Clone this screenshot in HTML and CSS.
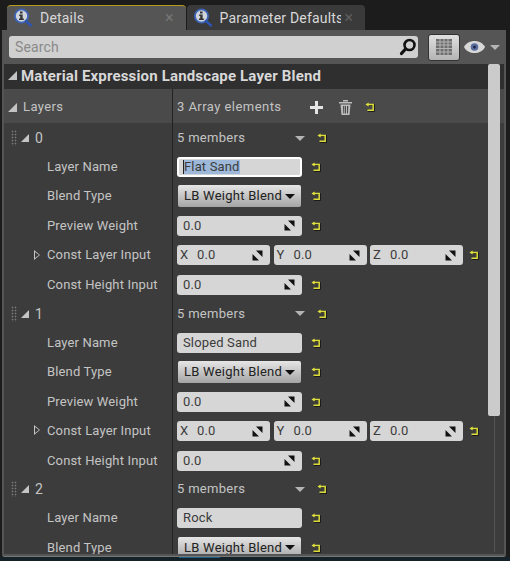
FILE: index.html
```html
<!DOCTYPE html>
<html lang="en">
<head>
  <meta charset="UTF-8">
  <meta name="viewport" content="width=device-width, initial-scale=1.0">
  <title>Details</title>
  <link rel="stylesheet" href="styles.css">
</head>
<body>
  <svg class="defs" width="0" height="0">
    <symbol id="i-reset" viewBox="0 0 10 10">
      <path d="M3.500 3H9V9H3" fill="none" stroke="#111" stroke-width="1.500"/>
      <path d="M3 2.500H8.200V8.200H2.500" fill="none" stroke="#dcdc3a" stroke-width="1.500"/>
      <path d="M3.600 .5V4.500L.5 2.500z" fill="#e4e43e"/>
    </symbol>
    <symbol id="i-spin" viewBox="0 0 11 11">
      <path d="M4 .5h6.500V7zM.5 4 7 10.500H.5z" fill="#111"/>
    </symbol>
    <symbol id="i-tab" viewBox="0 0 20 20">
      <circle cx="8.500" cy="8" r="6.600" fill="#cfd3da" stroke="#3e64b8" stroke-width="1.800"/>
      <path d="M13 13l5 4.500" stroke="#2e55b0" stroke-width="2.400" stroke-linecap="round"/>
      <path d="M7 3.600h2.600v1.800H7zM6.200 6.600h3.400v4h1.200v1.300H6v-1.300h1.200V8H6.200z" fill="#333"/>
    </symbol>
  </svg>

  <div class="tabs">
    <div class="tab tab-active">
      <svg class="tab-icon"><use href="#i-tab"/></svg>
      <span class="tab-label">Details</span>
      <span class="tab-close">×</span>
    </div>
    <div class="tab">
      <svg class="tab-icon"><use href="#i-tab"/></svg>
      <span class="tab-label">Parameter Defaults</span>
      <span class="tab-close">×</span>
    </div>
  </div>

  <div class="panel">
    <div class="toolbar">
      <div class="search">
        <span class="search-text">Search</span>
        <svg class="search-icon" viewBox="0 0 18 18"><circle cx="10.500" cy="7" r="5" fill="none" stroke="#111" stroke-width="2.600"/><path d="M6.500 11 2.500 15.500" stroke="#111" stroke-width="3.200" stroke-linecap="round"/></svg>
      </div>
      <div class="grid-btn">
        <svg width="16" height="16" viewBox="0 0 16 16"><path d="M0 0h16v16H0z" fill="#6e6e6e"/><path d="M0 3h16M0 6h16M0 9.500h16M0 13h16M4 0v16M8 0v16M12 0v16" stroke="#b4b4b4"/></svg>
      </div>
      <div class="eye">
        <svg width="21" height="12" viewBox="0 0 21 12"><path d="M0 6c4-8 17-8 21 0-4 8-17 8-21 0z" fill="#d8d8d8"/><circle cx="10.500" cy="6" r="3.800" fill="#5a6fa0"/><circle cx="10.500" cy="6" r="1.500" fill="#1f2a44"/></svg>
        <span class="arrow-down eye-arrow"></span>
      </div>
    </div>

    <div class="details">
      <div class="scroll-track"><div class="scroll-thumb"></div></div>
      <div class="title-row"><span class="tri"></span>Material Expression Landscape Layer Blend</div>

      <div class="row row-top">
        <div class="name-cell"><span class="tri"></span><span class="top-label">Layers</span></div>
        <div class="value-cell">
          <span class="count">3 Array elements</span>
          <svg class="add-icon" viewBox="0 0 13 13"><path d="M5 0h3v5h5v3H8v5H5V8H0V5h5z" fill="#e4e4e4"/></svg>
          <svg class="trash-icon" viewBox="0 0 13 15"><path d="M0 2h13v1.500H0zM4 0h5v1.500H4zM1.500 4.500h10L10.500 15h-8zM4 6l.3 7.500h1V6zM6 6v7.500h1V6zM8 6v7.500h1L9.300 6z" fill="#bdbdbd" fill-rule="evenodd"/></svg>
          <svg class="reset"><use href="#i-reset"/></svg>
        </div>
      </div>

      <div class="row row-group">
        <div class="name-cell"><span class="grip"></span><span class="tri"></span><span class="index">0</span></div>
        <div class="value-cell">
          <span class="members">5 members</span><span class="arrow-down"></span>
          <svg class="reset"><use href="#i-reset"/></svg>
        </div>
      </div>
      <div class="row">
        <div class="name-cell label">Layer Name</div>
        <div class="value-cell">
          <div class="field text-field focused"><span class="selected">Flat Sand</span></div>
          <svg class="reset"><use href="#i-reset"/></svg>
        </div>
      </div>
      <div class="row">
        <div class="name-cell label">Blend Type</div>
        <div class="value-cell">
          <div class="combo">LB Weight Blend<span class="combo-arrow"></span></div>
          <svg class="reset"><use href="#i-reset"/></svg>
        </div>
      </div>
      <div class="row">
        <div class="name-cell label">Preview Weight</div>
        <div class="value-cell">
          <div class="field num-field">0.0<svg class="spin"><use href="#i-spin"/></svg></div>
          <svg class="reset"><use href="#i-reset"/></svg>
        </div>
      </div>
      <div class="row">
        <div class="name-cell label"><span class="tri-open"></span>Const Layer Input</div>
        <div class="value-cell">
          <div class="field vec-field"><b>X</b>0.0<svg class="spin"><use href="#i-spin"/></svg></div>
          <div class="field vec-field"><b>Y</b>0.0<svg class="spin"><use href="#i-spin"/></svg></div>
          <div class="field vec-field"><b>Z</b>0.0<svg class="spin"><use href="#i-spin"/></svg></div>
          <svg class="reset reset-vec"><use href="#i-reset"/></svg>
        </div>
      </div>
      <div class="row">
        <div class="name-cell label">Const Height Input</div>
        <div class="value-cell">
          <div class="field num-field">0.0<svg class="spin"><use href="#i-spin"/></svg></div>
          <svg class="reset"><use href="#i-reset"/></svg>
        </div>
      </div>

      <div class="row row-group">
        <div class="name-cell"><span class="grip"></span><span class="tri"></span><span class="index">1</span></div>
        <div class="value-cell">
          <span class="members">5 members</span><span class="arrow-down"></span>
          <svg class="reset"><use href="#i-reset"/></svg>
        </div>
      </div>
      <div class="row">
        <div class="name-cell label">Layer Name</div>
        <div class="value-cell">
          <div class="field text-field">Sloped Sand</div>
          <svg class="reset"><use href="#i-reset"/></svg>
        </div>
      </div>
      <div class="row">
        <div class="name-cell label">Blend Type</div>
        <div class="value-cell">
          <div class="combo">LB Weight Blend<span class="combo-arrow"></span></div>
          <svg class="reset"><use href="#i-reset"/></svg>
        </div>
      </div>
      <div class="row">
        <div class="name-cell label">Preview Weight</div>
        <div class="value-cell">
          <div class="field num-field">0.0<svg class="spin"><use href="#i-spin"/></svg></div>
          <svg class="reset"><use href="#i-reset"/></svg>
        </div>
      </div>
      <div class="row">
        <div class="name-cell label"><span class="tri-open"></span>Const Layer Input</div>
        <div class="value-cell">
          <div class="field vec-field"><b>X</b>0.0<svg class="spin"><use href="#i-spin"/></svg></div>
          <div class="field vec-field"><b>Y</b>0.0<svg class="spin"><use href="#i-spin"/></svg></div>
          <div class="field vec-field"><b>Z</b>0.0<svg class="spin"><use href="#i-spin"/></svg></div>
          <svg class="reset reset-vec"><use href="#i-reset"/></svg>
        </div>
      </div>
      <div class="row">
        <div class="name-cell label">Const Height Input</div>
        <div class="value-cell">
          <div class="field num-field">0.0<svg class="spin"><use href="#i-spin"/></svg></div>
          <svg class="reset"><use href="#i-reset"/></svg>
        </div>
      </div>

      <div class="row row-group">
        <div class="name-cell"><span class="grip"></span><span class="tri"></span><span class="index">2</span></div>
        <div class="value-cell">
          <span class="members">5 members</span><span class="arrow-down"></span>
          <svg class="reset"><use href="#i-reset"/></svg>
        </div>
      </div>
      <div class="row">
        <div class="name-cell label">Layer Name</div>
        <div class="value-cell">
          <div class="field text-field">Rock</div>
          <svg class="reset"><use href="#i-reset"/></svg>
        </div>
      </div>
      <div class="row">
        <div class="name-cell label">Blend Type</div>
        <div class="value-cell">
          <div class="combo">LB Weight Blend<span class="combo-arrow"></span></div>
          <svg class="reset"><use href="#i-reset"/></svg>
        </div>
      </div>
    </div>
  </div>
  <div class="status-strip"><span class="status-mark"></span></div>
</body>
</html>
```
FILE: styles.css
```css
* {
  margin: 0;
  padding: 0;
  box-sizing: border-box;
}

html, body {
  width: 510px;
  height: 561px;
  overflow: hidden;
}

body {
  background-color: #1c1c1c;
  font-family: Roboto, "Liberation Sans", sans-serif;
  font-size: 13px;
  line-height: 14px;
  letter-spacing: .15px;
  color: #c4c4c4;
  padding-top: 5px;
}

.defs {
  display: block;
  height: 0;
}

/* Tabs */
.tabs {
  display: flex;
  height: 25px;
  padding-left: 7px;
  gap: 1px;
}

.tab {
  width: 178.5px;
  display: flex;
  align-items: center;
  padding-left: 6px;
  background-color: #3a3a3a;
  border-radius: 4px 4px 0 0;
}

.tab-active {
  background-color: #555;
  border-top: 1px solid #b59a1e;
}

.tab-icon {
  width: 20px;
  height: 20px;
  flex: none;
}

.tab-label {
  margin-left: 7px;
  font-size: 14px;
  line-height: 18px;
  letter-spacing: .2px;
  color: #d8d8d8;
  width: 121px;
  overflow: hidden;
  white-space: nowrap;
}

.tab-active .tab-label {
  width: 125px;
}

.tab-close {
  margin-left: 4px;
  font-size: 16px;
  line-height: 16px;
  color: #5e5e5e;
}

.tab-active .tab-close {
  margin-left: 0;
  color: #777;
}

/* Panel */
.panel {
  margin: 0 4px 0 2px;
  height: 527px;
  background-color: #555;
  padding: 2px 2px 2px;
  border-bottom: 1px solid #777;
  border-radius: 0 0 3px 3px;
}

.toolbar {
  height: 30px;
  display: flex;
  align-items: center;
  padding-left: 5px;
}

.search {
  width: 409px;
  height: 22px;
  background-color: #d0d0d0;
  border-radius: 3px;
  display: flex;
  align-items: center;
  justify-content: space-between;
  padding: 0 1px 0 6px;
}

.search-text {
  font-size: 14px;
  line-height: 18px;
  color: #8a8a8a;
}

.search-icon {
  width: 18px;
  height: 18px;
}

.grid-btn {
  width: 32px;
  height: 27px;
  margin-left: 10px;
  background: linear-gradient(#e0e0e0, #b4b4b4);
  border: 1px solid #333;
  border-radius: 3px;
  display: flex;
  align-items: center;
  justify-content: center;
}

.eye {
  display: flex;
  align-items: center;
  margin-left: 4px;
}

.arrow-down {
  width: 0;
  height: 0;
  flex: none;
  border-left: 5px solid transparent;
  border-right: 5px solid transparent;
  border-top: 5px solid #b4b4b4;
}

.eye-arrow {
  margin-left: 5px;
}

/* Details list */
.details {
  height: 490px;
  margin-top: 2px;
  background-color: #3c3c3c;
  overflow: hidden;
  position: relative;
}

.scroll-track {
  position: absolute;
  top: 0;
  right: 4px;
  bottom: 0;
  width: 12px;
  z-index: 1;
}

.scroll-track::before {
  content: "";
  position: absolute;
  top: 0;
  bottom: 2px;
  left: 6px;
  width: 1px;
  background-color: #555;
}

.scroll-thumb {
  width: 12px;
  height: 352px;
  background-color: #cbcbcb;
  border-radius: 2px;
  position: relative;
}

.title-row {
  height: 25px;
  padding: 0 0 2px 4px;
  background-color: #2f2f2f;
  display: flex;
  align-items: center;
  font-size: 15px;
  line-height: 18px;
  font-weight: 700;
  letter-spacing: .16px;
  color: #d8d8d8;
}

.title-row .tri {
  margin-right: 4px;
}

.tri {
  width: 0;
  height: 0;
  flex: none;
  border-left: 9px solid transparent;
  border-bottom: 9px solid #c4c4c4;
}

.tri-open {
  position: absolute;
  left: 30px;
  top: 10px;
  width: 0;
  height: 0;
  border-top: 5px solid transparent;
  border-bottom: 5px solid transparent;
  border-left: 6px solid #c4c4c4;
}

.tri-open::after {
  content: "";
  position: absolute;
  left: -5px;
  top: -3px;
  border-top: 3px solid transparent;
  border-bottom: 3px solid transparent;
  border-left: 4px solid #3c3c3c;
}

.row {
  display: flex;
  height: 29.5px;
  position: relative;
}

.row-top {
  height: 34px;
  background-color: #4a4a4a;
}

.row-group {
  height: 28.2px;
}

.name-cell {
  width: 169px;
  flex: none;
  display: flex;
  align-items: center;
  padding-top: 2px;
  border-right: 1px solid #222;
}

.row-top .name-cell {
  padding-left: 4px;
}

.row-group .tri {
  border-left-width: 8px;
  border-bottom-width: 8px;
}

.grip {
  width: 6px;
  height: 16px;
  flex: none;
  margin-left: 7px;
  margin-right: 4px;
  background-image: radial-gradient(#7a7a7a 40%, transparent 50%);
  background-size: 3px 3px;
}

.top-label {
  margin-left: 6px;
  letter-spacing: .4px;
}

.index {
  margin-left: 6px;
  font-size: 14px;
}

.label {
  padding-left: 43px;
}

.value-cell {
  display: flex;
  align-items: center;
  padding: 2px 0 0 4px;
  flex: 1;
}

.count {
  width: 133px;
  letter-spacing: .45px;
}

.add-icon {
  width: 13px;
  height: 13px;
}

.trash-icon {
  width: 13px;
  height: 15px;
  margin-left: 16px;
}

.members {
  width: 118px;
  letter-spacing: .3px;
}

.reset {
  width: 10px;
  height: 10px;
  margin-left: 9px;
  flex: none;
}

.row-top .reset {
  margin-left: 13px;
}

.reset-vec {
  margin-left: 2px;
}

.row-group .reset {
  margin-left: 12px;
}

/* Inputs */
.field {
  height: 20px;
  background-color: #d6d6d6;
  border-radius: 3px;
  color: #3c3c3c;
  display: flex;
  align-items: center;
  padding-left: 6px;
}

.text-field, .num-field {
  width: 125px;
}

.num-field {
  justify-content: space-between;
  padding-right: 7px;
}

.focused {
  border: 2px solid #fff;
  padding-left: 4px;
}

.selected {
  background-color: #9db8d8;
  border-left: 1px solid #222;
}

.vec-field {
  width: 93px;
  margin-right: 3.5px;
  padding: 0 7px 0 3px;
}

.vec-field b {
  font-weight: 400;
  width: 17px;
}

.vec-field .spin {
  margin-left: auto;
}

.spin {
  width: 11px;
  height: 11px;
  flex: none;
}

.combo {
  width: 123px;
  height: 22px;
  margin-left: 1px;
  background: linear-gradient(#e6e6e6, #a4a4a4);
  border-radius: 2px;
  color: #222;
  display: flex;
  align-items: center;
  padding-left: 6px;
  white-space: nowrap;
  letter-spacing: .25px;
}

.combo + .reset {
  margin-left: 10px;
}

.combo-arrow {
  width: 0;
  height: 0;
  margin-left: 3px;
  border-left: 5px solid transparent;
  border-right: 5px solid transparent;
  border-top: 5px solid #111;
}

/* Strip under the panel */
.status-strip {
  height: 4px;
  background-color: #14222a;
  padding-left: 179px;
}

.status-mark {
  display: block;
  width: 41px;
  height: 1px;
  background-color: #1f5f86;
}
```
